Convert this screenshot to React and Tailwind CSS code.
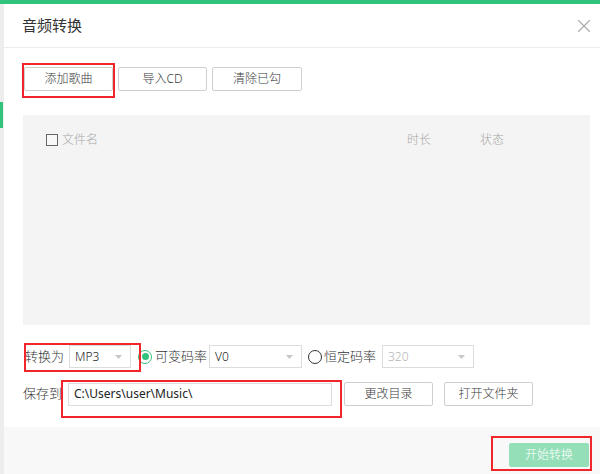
import React from 'react';
import { X } from 'lucide-react';

const font = { fontFamily: '"Noto Sans", "Noto Sans CJK SC", sans-serif' };

function Btn({ children, className = '' }) {
  return (
    <button className={`h-[24px] border border-[#cfcfcf] bg-white rounded-[2px] text-[12px] text-[#3a3a3a] font-light flex items-center justify-center ${className}`}>
      {children}
    </button>
  );
}

function Select({ value, className = '', disabled }) {
  return (
    <div className={`h-[23px] border border-[#dcdcdc] bg-white flex items-center justify-between pl-[5px] pr-[8px] text-[12px] ${disabled ? 'text-[#b5b5b5]' : 'text-[#222]'} ${className}`}>
      <span>{value}</span>
      <svg width="7" height="4" viewBox="0 0 7 4"><path d="M0 0h7L3.5 4z" fill="#c8c8c8" /></svg>
    </div>
  );
}

function Radio({ checked }) {
  return checked ? (
    <div className="w-[14px] h-[14px] rounded-full border border-[#31c27c] flex items-center justify-center">
      <div className="w-[7px] h-[7px] rounded-full bg-[#31c27c]" />
    </div>
  ) : (
    <div className="w-[14px] h-[14px] rounded-full border border-[#333]" />
  );
}

function RedBox({ className }) {
  return <div className={`absolute border-2 border-[#f0262a] pointer-events-none ${className}`} />;
}

export default function App() {
  return (
    <div className="relative w-[600px] h-[474px] overflow-hidden bg-white flex flex-col" style={font}>
      <div className="h-[4px] bg-[#31c27c] shrink-0" />
      <div className="flex flex-1">
        {/* left strip of window behind */}
        <div className="w-[4px] bg-[#ededed] flex flex-col">
          <div className="mt-[98px] h-[26px] w-[3px] bg-[#31c27c]" />
        </div>

        <div className="flex-1 flex flex-col">
          {/* Header */}
          <div className="h-[44px] border-b border-[#ececec] flex items-center justify-between pl-[18px] pr-[5px]">
            <span className="text-[15px] text-[#333]">音频转换</span>
            <X size={22} strokeWidth={1.3} className="text-[#b0b0b0]" />
          </div>

          {/* Body */}
          <div className="flex-1 pl-[19px] pr-[10px]">
            <div className="mt-[19px] flex gap-[5px] pl-[1px]">
              <Btn className="w-[89px]">添加歌曲</Btn>
              <Btn className="w-[89px]">导入CD</Btn>
              <Btn className="w-[90px]">清除已勾</Btn>
            </div>

            <div className="mt-[24px] h-[210px] bg-[#f4f4f4] pt-[16px] pl-[23px]">
              <div className="flex items-center text-[12px] text-[#a8a8a8] font-light">
                <div className="w-[12px] h-[12px] border border-[#666] bg-[#f8f8f8]" />
                <span className="ml-[4px] w-[345px]">文件名</span>
                <span className="w-[73px]">时长</span>
                <span>状态</span>
              </div>
            </div>

            <div className="mt-[20px] flex items-center text-[13px] text-[#333] font-light h-[23px]">
              <span className="ml-[2px] w-[44px]">转换为</span>
              <Select value="MP3" className="w-[62px]" />
              <div className="ml-[7px]"><Radio checked /></div>
              <span className="ml-[3px] w-[54px]">可变码率</span>
              <Select value="V0" className="w-[93px]" />
              <div className="ml-[6px]"><Radio /></div>
              <span className="ml-[2px] w-[58px]">恒定码率</span>
              <Select value="320" className="w-[92px]" disabled />
            </div>

            <div className="mt-[14px] flex items-center text-[13px] text-[#333] font-light">
              <span className="w-[45px]">保存到</span>
              <div className="w-[264px] h-[23px] border border-[#dcdcdc] flex items-center pl-[5px] text-[12px] text-[#222] font-normal">
                C:\Users\user\Music\
              </div>
              <Btn className="ml-[12px] w-[89px] h-[23px]">更改目录</Btn>
              <Btn className="ml-[11px] w-[89px] h-[23px]">打开文件夹</Btn>
            </div>
          </div>

          {/* Footer */}
          <div className="h-[47px] bg-[#f8f8f8] flex items-start justify-end pr-[11px] pt-[16px]">
            <div className="w-[80px] h-[24px] bg-[#95dfb8] rounded-[2px] text-white text-[12px] font-light flex items-center justify-center">
              开始转换
            </div>
          </div>
        </div>
      </div>

      <RedBox className="left-[22px] top-[63px] w-[93px] h-[35px]" />
      <RedBox className="left-[24px] top-[343px] w-[117px] h-[29px]" />
      <RedBox className="left-[61px] top-[380px] w-[281px] h-[38px]" />
      <RedBox className="left-[491px] top-[436px] w-[101px] h-[35px]" />
    </div>
  );
}
